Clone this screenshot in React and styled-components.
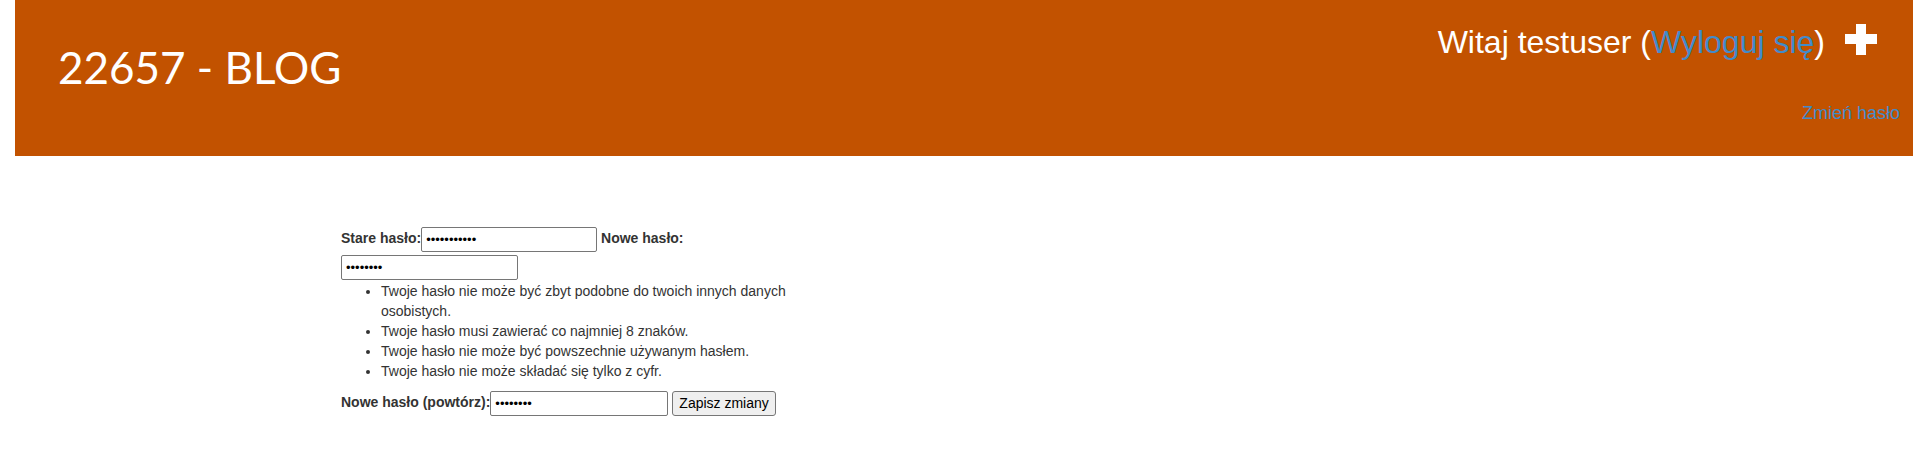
import styled, { createGlobalStyle } from "styled-components";

const GlobalStyle = createGlobalStyle`
  body {
    margin: 0;
    background: #fff;
    font-family: "Liberation Sans", Arial, sans-serif;
    font-size: 14px;
    line-height: 20px;
    color: #333;
  }
`;

const Header = styled.header`
  margin-left: 15px;
  height: 156px;
  background: #c25200;
  display: flex;
  justify-content: space-between;
  color: #fff;
`;

const Brand = styled.h1`
  margin: 0;
  padding: 39px 0 0 43px;
  font-family: Lato, "Open Sans", sans-serif;
  font-weight: 400;
  font-size: 44px;
  line-height: 56px;
`;

const UserBox = styled.div`
  display: flex;
  flex-direction: column;
  align-items: flex-end;
`;

const Greeting = styled.div`
  display: flex;
  align-items: center;
  padding: 22px 36px 0 0;
  font-size: 32px;
  line-height: 40px;
`;

const Link = styled.a`
  color: #428bca;
  text-decoration: none;
`;

const PlusIcon = styled.svg`
  margin-left: 20px;
  margin-top: -6px;
`;

const SubLink = styled.div`
  padding: 41px 13px 0 0;
  font-size: 18px;
  line-height: 20px;
`;

const Main = styled.main`
  padding: 68px 0 0 341px;
`;

const Form = styled.form`
  width: 470px;
`;

const Line = styled.div`
  line-height: 28px;
`;

const Label = styled.label`
  font-weight: 700;
`;

const Field = styled.input`
  box-sizing: border-box;
  width: ${(p) => p.$w || "177px"};
  height: 25px;
  padding: 1px 4px;
  border: 1px solid #767676;
  border-radius: 2px;
  font-family: "Liberation Sans", Arial, sans-serif;
  font-size: 13px;
  color: #000;
  vertical-align: middle;
`;

const Hints = styled.ul`
  margin: 1px 0 7px;
  padding-left: 40px;
  line-height: 20px;
`;

const Button = styled.button`
  box-sizing: border-box;
  height: 25px;
  margin-left: 4px;
  padding: 0 6px;
  border: 1px solid #767676;
  border-radius: 3px;
  background: #efefef;
  font-family: "Liberation Sans", Arial, sans-serif;
  font-size: 14px;
  color: #000;
  vertical-align: middle;
`;

const hints = [
  "Twoje hasło nie może być zbyt podobne do twoich innych danych osobistych.",
  "Twoje hasło musi zawierać co najmniej 8 znaków.",
  "Twoje hasło nie może być powszechnie używanym hasłem.",
  "Twoje hasło nie może składać się tylko z cyfr.",
];

const App = () => {
  return (
    <>
      <GlobalStyle />
      <Header>
        <Brand>22657 - BLOG</Brand>
        <UserBox>
          <Greeting>
            <span>
              Witaj testuser (<Link href="#">Wyloguj się</Link>)
            </span>
            <PlusIcon width="32" height="31" viewBox="0 0 32 31">
              <rect x="11" y="0" width="10" height="31" fill="#fff" />
              <rect x="0" y="10" width="32" height="10" fill="#fff" />
            </PlusIcon>
          </Greeting>
          <SubLink>
            <Link href="#">Zmień hasło</Link>
          </SubLink>
        </UserBox>
      </Header>
      <Main>
        <Form onSubmit={(e) => e.preventDefault()}>
          <Line>
            <Label>Stare hasło:</Label>
            <Field type="password" defaultValue="oldpassword" $w="176px" />{" "}
            <Label>Nowe hasło:</Label> <Field type="password" defaultValue="newpass1" />
          </Line>
          <Hints>
            {hints.map((h) => (
              <li key={h}>{h}</li>
            ))}
          </Hints>
          <Line>
            <Label>Nowe hasło (powtórz):</Label>
            <Field type="password" defaultValue="newpass1" $w="178px" />
            <Button type="submit">Zapisz zmiany</Button>
          </Line>
        </Form>
      </Main>
    </>
  );
};

export default App;
